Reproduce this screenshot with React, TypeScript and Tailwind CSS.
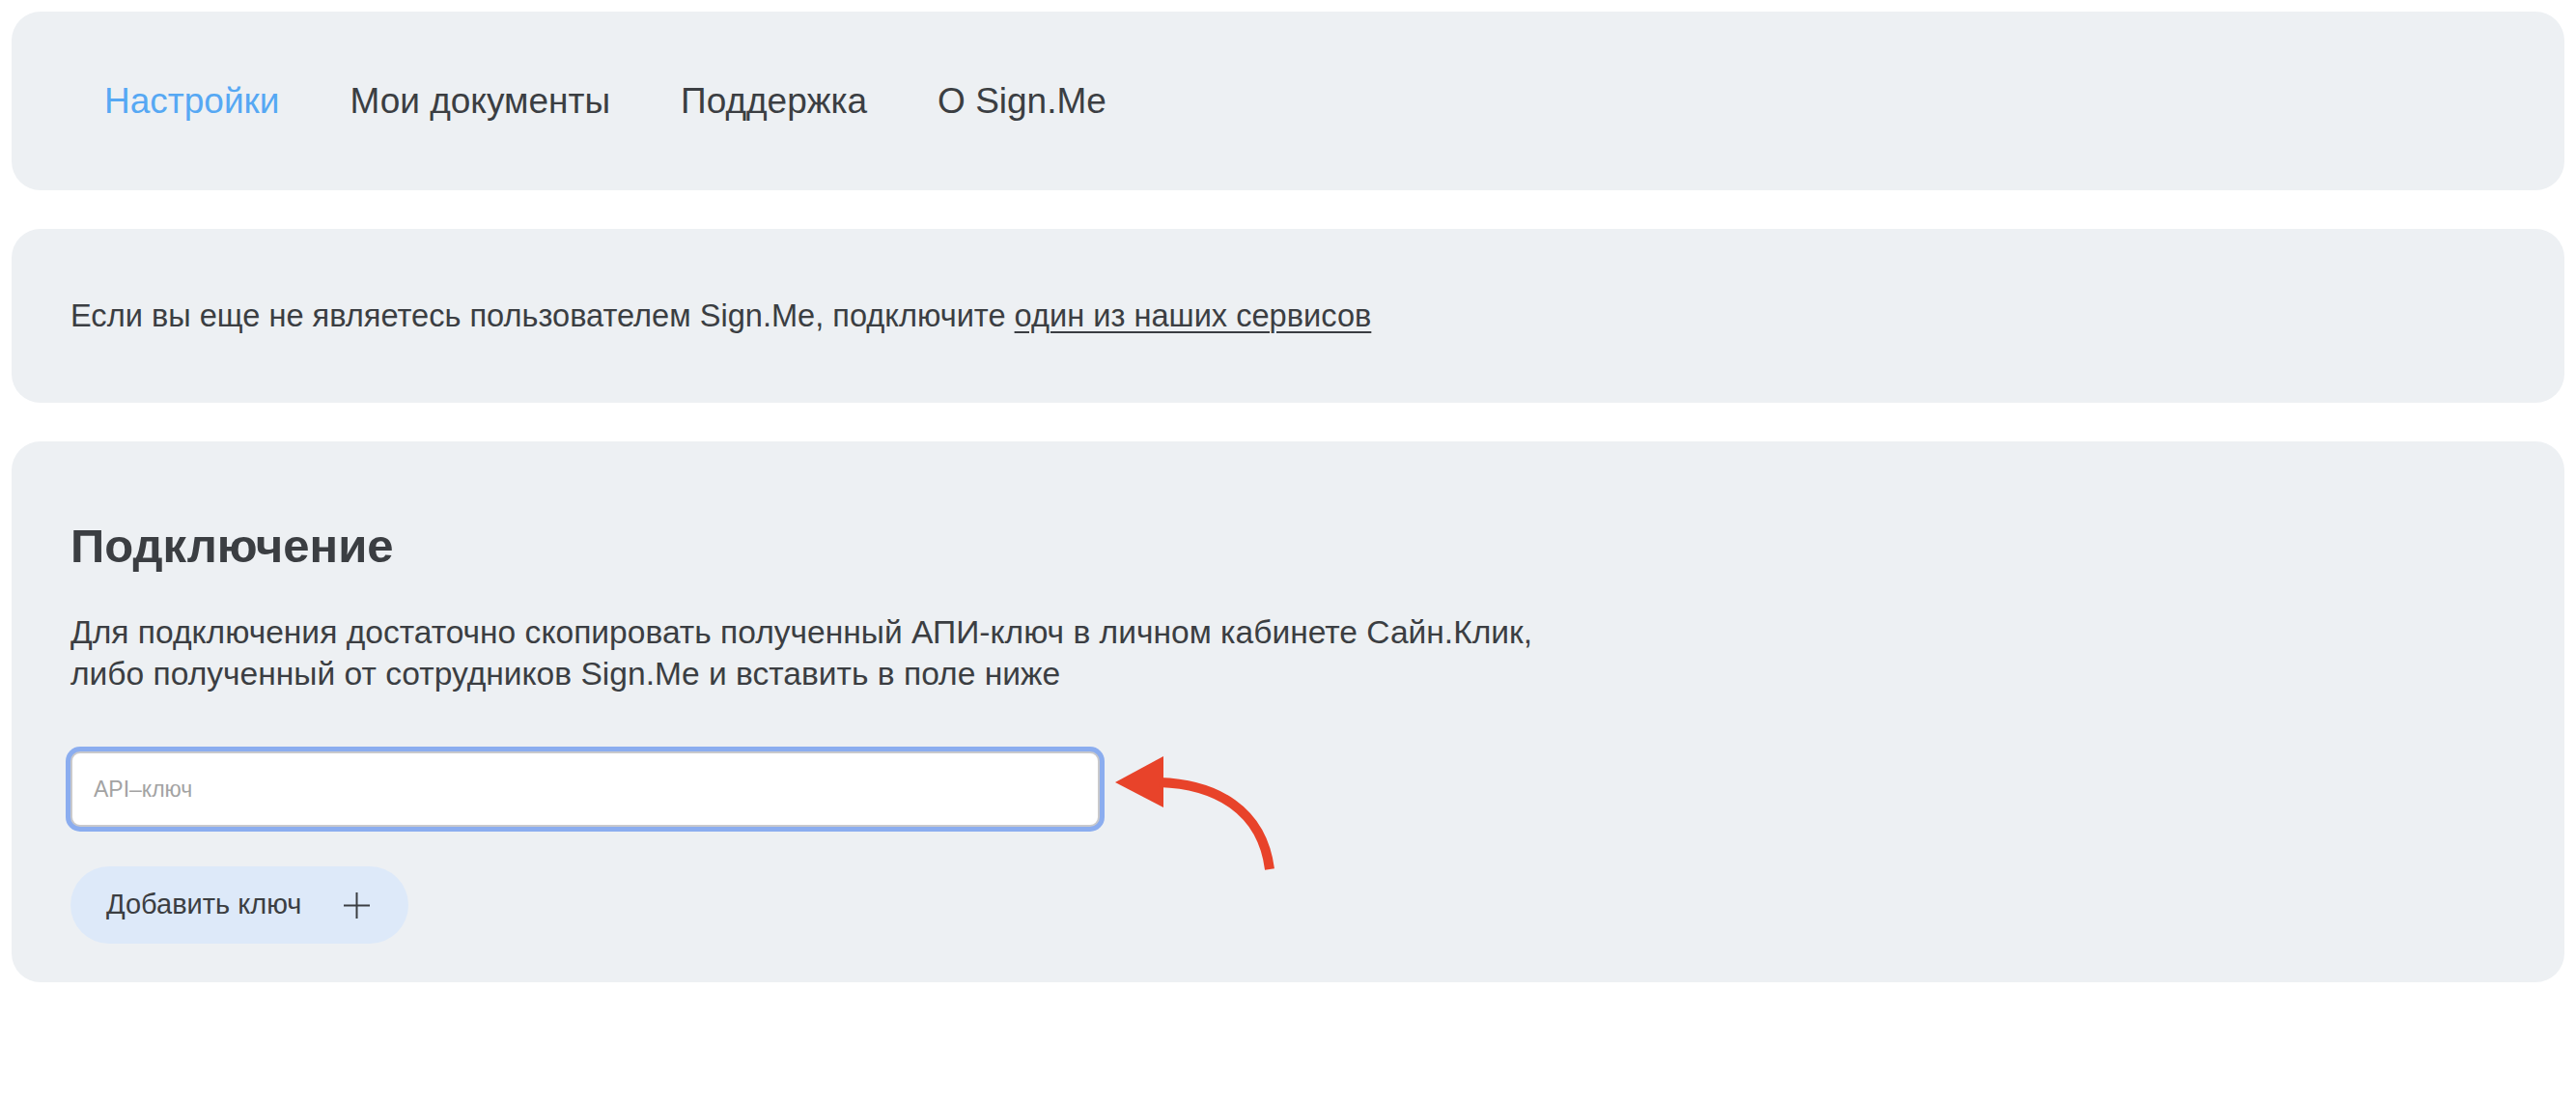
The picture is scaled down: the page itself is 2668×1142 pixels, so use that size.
import React from 'react';

const navItems = ['Настройки', 'Мои документы', 'Поддержка', 'О Sign.Me'];

const PlusIcon: React.FC = () => (
  <svg width="27" height="27" viewBox="0 0 27 27" fill="none" stroke="#3b3e42" strokeWidth="2">
    <path d="M13.5 0v27M0 13.5h27" />
  </svg>
);

const Arrow: React.FC = () => (
  <svg width="180" height="130" viewBox="0 0 180 130" className="absolute left-[1076px] top-[-6px] pointer-events-none">
    <path d="M6 38 L56 11 L56 64 Z" fill="#e8432a" />
    <path d="M52 38 C110 40 158 66 166 128" fill="none" stroke="#e8432a" strokeWidth="10" />
  </svg>
);

const App: React.FC = () => {
  return (
    <div className="min-h-screen bg-white p-[12px] font-['Liberation_Sans',Arial,sans-serif] text-[#3b3e42]">
      <div className="flex flex-col gap-[40px]">
        <nav className="h-[185px] rounded-[30px] bg-[#edf0f3] pl-[96px] flex items-center gap-[73px] text-[37px] leading-none">
          {navItems.map((item, i) => (
            <a key={item} href="#" className={i === 0 ? 'text-[#56a8f3]' : 'text-[#3b3e42]'}>
              {item}
            </a>
          ))}
        </nav>

        <div className="h-[180px] rounded-[30px] bg-[#edf0f3] px-[61px] flex items-center text-[32.6px]">
          <p>
            Если вы еще не являетесь пользователем Sign.Me, подключите{' '}
            <a href="#" className="underline underline-offset-[5px] decoration-[2px]">один из наших сервисов</a>
          </p>
        </div>

        <section className="rounded-[30px] bg-[#edf0f3] px-[61px] pt-[80px] pb-[40px]">
          <h2 className="text-[49px] leading-[56px] font-bold">Подключение</h2>
          <p className="mt-[40px] text-[33.6px] leading-[43px]">
            Для подключения достаточно скопировать полученный АПИ-ключ в личном кабинете Сайн.Клик,
            <br />
            либо полученный от сотрудников Sign.Me и вставить в поле ниже
          </p>

          <div className="relative mt-[59px] w-[1066px]">
            <input
              type="text"
              placeholder="API–ключ"
              className="w-full h-[78px] rounded-[10px] bg-white border-2 border-[#c9c9cc] ring-[5px] ring-[#8badef] px-[22px] text-[23px] outline-none placeholder:text-[#a3a3a3]"
            />
            <Arrow />
          </div>

          <button className="mt-[41px] h-[80px] rounded-full bg-[#dde9f9] pl-[37px] pr-[40px] flex items-center gap-[44px] text-[29px] text-[#3b3e42]">
            <span>Добавить ключ</span>
            <PlusIcon />
          </button>
        </section>
      </div>
    </div>
  );
};

export default App;
